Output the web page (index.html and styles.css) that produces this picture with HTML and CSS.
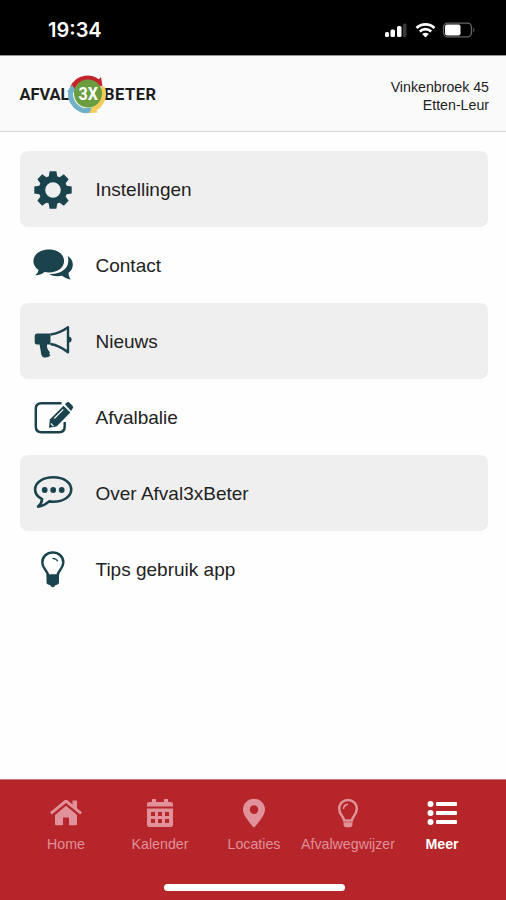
FILE: index.html
```html
<!DOCTYPE html>
<html lang="nl">
<head>
<meta charset="UTF-8">
<meta name="viewport" content="width=device-width, initial-scale=1">
<title>Afval3xBeter</title>
<link rel="stylesheet" href="styles.css">
</head>

<body>

<div class="statusbar">
  <div class="time">19:34</div>
  <svg class="status-icons" width="94" height="20" viewBox="0 0 94 20">
    <g fill="#fff">
      <rect x="2" y="12" width="4" height="5" rx="1.5"/>
      <rect x="7.500" y="9.500" width="4.500" height="7.500" rx="1.500"/>
      <rect x="14" y="6" width="4.500" height="11" rx="1.500"/>
    </g>
    <rect x="20" y="3.500" width="3.500" height="13.500" rx="1.500" fill="#3a3a3a"/>
    <g fill="none" stroke="#fff" stroke-width="2.700">
      <path d="M33.500 8a13 13 0 0 1 18 0"/>
      <path d="M36.800 11.400a8.500 8.500 0 0 1 11.400 0"/>
    </g>
    <path d="M42.500 17.500l-3.300-3.400a5 5 0 0 1 6.600 0z" fill="#fff"/>
    <rect x="60.500" y="3.200" width="28" height="13.600" rx="4" fill="none" stroke="#666" stroke-width="1.300"/>
    <rect x="62" y="4.500" width="15.500" height="11" rx="2" fill="#fff"/>
    <path d="M90.300 7.500q2.400 2.500 0 5z" fill="#666"/>
  </svg>
</div>

<div class="header">
  <svg class="logo" width="140" height="44" viewBox="0 0 140 44">
    <text class="logo-text" x="1.500" y="27.500" textLength="50">AFVAL</text>
    <text class="logo-text" x="86" y="27.500" textLength="52">BETER</text>
    <g fill="none" stroke-width="5">
      <path d="M54.500 16A16.300 16.300 0 0 1 82 12" stroke="#c4242b"/>
      <path d="M84 15A16.300 16.300 0 0 1 74 37.500" stroke="#f2cd59"/>
      <path d="M74 37.700A16.300 16.300 0 0 1 53.500 17" stroke="#71b1c6"/>
    </g>
    <path d="M76 12.500l7-7.500 1.500 9.500z" fill="#c4242b"/>
    <path d="M49 20l5-7 5 7z" fill="#71b1c6"/>
    <path d="M71.500 41l3-7 5.500 6.500z" fill="#f2cd59"/>
    <circle cx="70" cy="21.500" r="14" fill="#6b9c3d"/>
    <text class="logo-mid" x="60.500" y="28" textLength="19.500" lengthAdjust="spacingAndGlyphs">3X</text>
  </svg>
  <div class="address">Vinkenbroek 45<br>Etten-Leur</div>
</div>

<div class="menu">
  <div class="item shade">
    <svg width="42" height="42" viewBox="0 0 42 42">
      <g transform="translate(21 21)" fill="#1b434d">
        <path id="tooth" d="M-4.500-12l1.100-6.700h6.800l1.100 6.700z"/>
        <use href="#tooth" transform="rotate(45)"/>
        <use href="#tooth" transform="rotate(90)"/>
        <use href="#tooth" transform="rotate(135)"/>
        <use href="#tooth" transform="rotate(180)"/>
        <use href="#tooth" transform="rotate(225)"/>
        <use href="#tooth" transform="rotate(270)"/>
        <use href="#tooth" transform="rotate(315)"/>
        <circle r="11" fill="none" stroke="#1b434d" stroke-width="6.400"/>
      </g>
    </svg>
    <span>Instellingen</span>
  </div>

  <div class="item">
    <svg width="42" height="42" viewBox="0 0 42 42">
      <g fill="#1b434d">
        <path d="M17 4.500c8.800 0 15.100 5 15.100 11.500S25.800 27.500 17 27.500q-2.500 0-4.500-.4-4 3.200-9.500 3.200 3-2 3.600-5.400C3.300 22.800 1.400 19.800 1.400 16c0-6.500 6.800-11.500 15.600-11.500z"/>
        <path d="M35.800 11c3.300 2.200 5 5 5 8.700 0 3.500-1.700 6.200-4.400 8.300q.5 4 2.400 6.800-5.200-1-8.700-4-7.500 1.500-13.300-1.800C27.500 30 36.300 24 36.300 16q0-2.500-.5-5z"/>
      </g>
    </svg>
    <span>Contact</span>
  </div>

  <div class="item shade">
    <svg width="42" height="42" viewBox="0 0 42 42">
      <path d="M5 12.500h13.500v11h-3.400q-.8 4 2.400 7.200 1 1.200-.4 2.200l1.400 1.300q-2 2.600-5.400 2.400-3-.1-3.800-3.200l-1.700-9.900H5q-2.300 0-2.300-2.500v-6q0-2.500 2.300-2.500z" fill="#1b434d"/>
      <path d="M18.500 13.500Q27.500 12.500 36 6.300v25Q27.500 24.500 18.500 23" fill="none" stroke="#1b434d" stroke-width="2.400" stroke-linejoin="round"/>
      <path d="M37 15.500q2.700.5 2.700 3t-2.700 3z" fill="#1b434d"/>
    </svg>
    <span>Nieuws</span>
  </div>

  <div class="item">
    <svg width="42" height="42" viewBox="0 0 42 42">
      <path d="M29.500 6.300H9.500Q3.800 6.300 3.800 12v17.500q0 5.700 5.700 5.700h17.500q5.700 0 5.700-5.700V25" fill="none" stroke="#1b434d" stroke-width="2.500"/>
      <path d="M17 30.800l.8-8.200L31.500 8.800l6.800 6.800-13.700 13.900z" fill="#1b434d"/>
      <path d="M33 7.300l1.500-1.500q1.500-1.500 3 0l3 3q1.500 1.500 0 3l-1.500 2.100z" fill="#1b434d"/>
      <path d="M22.300 21.500l9-9.200M18.800 26.500l2.700 2.700" stroke="#fff" stroke-width="1.100"/>
    </svg>
    <span>Afvalbalie</span>
  </div>

  <div class="item shade">
    <svg width="42" height="42" viewBox="0 0 42 42">
      <path d="M21.300 4.300c10.400 0 17.900 5.200 17.900 12.200S31.700 28.700 21.300 28.700q-2.200 0-4.200-.3-4.600 4.400-11.100 5.200 3.700-2.800 4.100-7.400C5.800 24 3.100 20.500 3.100 16.500c0-7 7.800-12.200 18.200-12.200z" fill="none" stroke="#1b434d" stroke-width="2.600" stroke-linejoin="round"/>
      <g fill="#1b434d">
        <circle cx="12.700" cy="17" r="2.900"/>
        <circle cx="21.200" cy="17" r="2.900"/>
        <circle cx="29.700" cy="17" r="2.900"/>
      </g>
    </svg>
    <span>Over Afval3xBeter</span>
  </div>

  <div class="item">
    <svg width="42" height="42" viewBox="0 0 42 42">
      <path d="M16 26.500c0-5-5.700-6.500-5.700-13C10.300 7.500 15 3.600 20.800 3.600S31.300 7.500 31.300 13.500c0 6.500-5.700 8-5.700 13z" fill="none" stroke="#1b434d" stroke-width="2.500"/>
      <path d="M14.500 26h12.500v7.500q0 1.500-1.500 2l-2.200.8q-.8 2-2.500 2t-2.500-2l-2.300-.8q-1.500-.5-1.500-2z" fill="#1b434d"/>
      <path d="M20.500 9.300q4 .2 5.300 3" fill="none" stroke="#1b434d" stroke-width="1.200"/>
    </svg>
    <span>Tips gebruik app</span>
  </div>
</div>

<div class="nav">
  <div class="tabs">
    <div class="tab">
      <svg width="34" height="30" viewBox="0 0 34 30" fill="#e0919a">
        <path d="M17 7.700l11 9.300v9.200q0 1-1 1h-7V19.500h-6v7.700H7q-1 0-1-1V17z"/>
        <path d="M1 14.200L15.500 2.300q1.500-1.200 3 0L23.500 6.400V2.500H28v7.700l5 4-1.700 2.200L17 4.900 2.700 16.400z"/>
      </svg>
      <span>Home</span>
    </div>
    <div class="tab">
      <svg width="34" height="30" viewBox="0 0 34 30" fill="#e0919a">
        <path d="M4 8.500V6.200Q4 4 6.200 4H9V1h4v3h8V1h4v3h2.800Q30 4 30 6.200v2.300z"/>
        <path fill-rule="evenodd" d="M4 10.500h26v16.300q0 2.200-2.200 2.200H6.200Q4 29 4 26.800zM8 14v4h4v-4zm7 0v4h4v-4zm7 0v4h4v-4zM8 21v4h4v-4zm7 0v4h4v-4zm7 0v4h4v-4z"/>
      </svg>
      <span>Kalender</span>
    </div>
    <div class="tab">
      <svg width="34" height="30" viewBox="0 0 34 30" fill="#e0919a">
        <path fill-rule="evenodd" d="M17 .8c6.200 0 11 4.800 11 10.700 0 4.500-3.500 9.500-10 17.200q-1 1.100-2 0C9.500 21 6 16 6 11.500 6 5.600 10.800.8 17 .8zm0 6.500a4.300 4.300 0 1 0 0 8.600 4.300 4.300 0 0 0 0-8.600z"/>
      </svg>
      <span>Locaties</span>
    </div>
    <div class="tab">
      <svg width="34" height="30" viewBox="0 0 34 30">
        <path d="M13.200 22.500c-.5-4-5-6-5-11.800C8.200 5.500 12.200 2 17 2s8.800 3.500 8.800 8.700c0 5.800-4.500 7.800-5 11.800z" fill="none" stroke="#e0919a" stroke-width="2.500"/>
        <path d="M12.500 11q.2-4.300 4.500-4.700" fill="none" stroke="#e0919a" stroke-width="1.700"/>
        <path d="M12.500 24.300h9V26q0 3.300-3 3.300h-3q-3 0-3-3.300z" fill="#e0919a"/>
      </svg>
      <span>Afvalwegwijzer</span>
    </div>
    <div class="tab active">
      <svg width="34" height="30" viewBox="0 0 34 30" fill="#fff">
        <circle cx="5.500" cy="6" r="3"/>
        <circle cx="5.500" cy="15" r="3"/>
        <circle cx="5.500" cy="24" r="3"/>
        <rect x="11" y="4" width="21" height="4" rx="1"/>
        <rect x="11" y="13" width="21" height="4" rx="1"/>
        <rect x="11" y="22" width="21" height="4" rx="1"/>
      </svg>
      <span>Meer</span>
    </div>
  </div>
  <div class="homebar"></div>
</div>

</body>
</html>
```
FILE: styles.css
```css
*{
  box-sizing:border-box;
}

body{
  margin:0;
  height:900px;
  display:flex;
  flex-direction:column;
  overflow:hidden;
  font-family:"Liberation Sans",Arial,sans-serif;
  background:#fefefe;
  color:#222;
}

svg{
  display:block;
  flex:none;
}

.statusbar{
  height:56px;
  padding:0 29px 0 48px;
  display:flex;
  justify-content:space-between;
  align-items:center;
  background:#000;
  border-bottom:1px solid #999;
}

.time{
  font-family:Inter,sans-serif;
  font-size:20px;
  font-weight:600;
  color:#fff;
  padding-top:5px;
}

.status-icons{
  margin-top:4px;
}

.header{
  height:76px;
  padding:0 17px 0 18px;
  display:flex;
  justify-content:space-between;
  align-items:center;
  background:#fafafa;
  border-bottom:1px solid #d8d8d8;
}

.logo-text{
  font-family:Roboto,sans-serif;
  font-size:16.5px;
  font-weight:700;
  fill:#1d1d1d;
}

.logo-mid{
  font-family:Roboto,sans-serif;
  font-size:19px;
  font-weight:700;
  fill:#fff;
}

.address{
  font-size:14.2px;
  line-height:18px;
  text-align:right;
  padding-top:4px;
}

.menu{
  flex:1;
  padding:19px 18px 0 20px;
}

.item{
  height:76px;
  padding:2px 0 0 11.5px;
  display:flex;
  align-items:center;
  gap:22px;
  border-radius:8px;
  font-size:19px;
}

.shade{
  background:#efefef;
}

.nav{
  height:121px;
  padding:18px 17px 0 19px;
  background:#b6252a;
  border-top:1px solid #cf7c80;
}

.tabs{
  display:flex;
  height:86px;
}

.tab{
  flex:1;
  display:flex;
  flex-direction:column;
  align-items:center;
  gap:8px;
  font-size:14.2px;
  line-height:16px;
  color:#e0919a;
}

.active{
  color:#fff;
  font-weight:bold;
}

.homebar{
  width:181px;
  height:7px;
  margin:0 auto;
  border-radius:4px;
  background:#fff;
}
```
